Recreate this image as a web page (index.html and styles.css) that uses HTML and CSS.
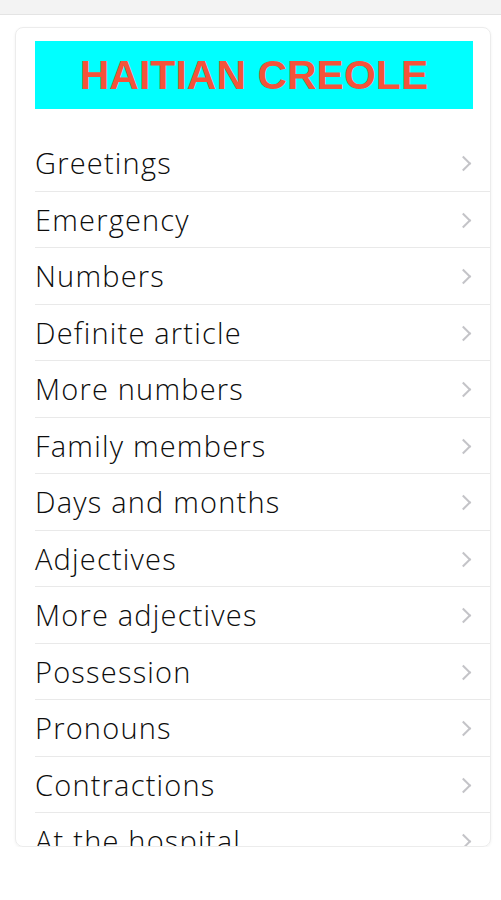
FILE: index.html
```html
<!DOCTYPE html>
<html lang="en">
<head>
  <meta charset="UTF-8">
  <title>Haitian Creole</title>
  <meta name="viewport" content="width=device-width, initial-scale=1.0">
  <link rel="stylesheet" href="styles.css">
</head>
<body>
  <div class="topbar"></div>
  <div class="card">
    <div class="banner">HAITIAN CREOLE</div>
    <ul class="topics">
      <li>Greetings<span class="chev"></span></li>
      <li>Emergency<span class="chev"></span></li>
      <li>Numbers<span class="chev"></span></li>
      <li>Definite article<span class="chev"></span></li>
      <li>More numbers<span class="chev"></span></li>
      <li>Family members<span class="chev"></span></li>
      <li>Days and months<span class="chev"></span></li>
      <li>Adjectives<span class="chev"></span></li>
      <li>More adjectives<span class="chev"></span></li>
      <li>Possession<span class="chev"></span></li>
      <li>Pronouns<span class="chev"></span></li>
      <li>Contractions<span class="chev"></span></li>
      <li>At the hospital<span class="chev"></span></li>
    </ul>
  </div>
</body>
</html>
```
FILE: styles.css
```css
:root {
  --cyan: #00ffff;
  --title: #f4533a;
  --line: #e9e9e9;
  --chev: #c4c4c8;
  --text: #0d0d0d;
}

body {
  margin: 0;
  background: white;
  font-family: "Open Sans", Lato, sans-serif;
  color: var(--text);
}
.topbar {
  height: 14px;
  background: #f3f3f3;
  border-bottom: 1px solid #e4e4e4;
}
.card {
  margin: 12px 10px 0 15px;
  height: 820px;
  border: 1px solid #ececec;
  border-radius: 8px;
  box-shadow: 0 1px 3px rgba(0,0,0,0.06);
  overflow: hidden;
  padding: 13px 0 0 19px;
  box-sizing: border-box;
}
.banner {
  width: 438px;
  height: 68px;
  background: var(--cyan);
  color: var(--title);
  font-family: "Liberation Sans", Arial, sans-serif;
  font-weight: bold;
  font-size: 41px;
  line-height: 68px;
  text-align: center;
}
.topics {
  list-style: none;
  margin: 26px 0 0;
  padding: 0;
}
.topics li {
  height: 56.5px;
  box-sizing: border-box;
  border-bottom: 1px solid var(--line);
  display: flex;
  align-items: center;
  justify-content: space-between;
  padding-right: 21px;
  font-size: 29px;
  font-weight: 300;
  letter-spacing: 1.2px;
}
.chev {
  width: 9px;
  height: 9px;
  border-top: 2px solid var(--chev);
  border-right: 2px solid var(--chev);
  transform: rotate(45deg);
  margin-top: 2px;
}
```
